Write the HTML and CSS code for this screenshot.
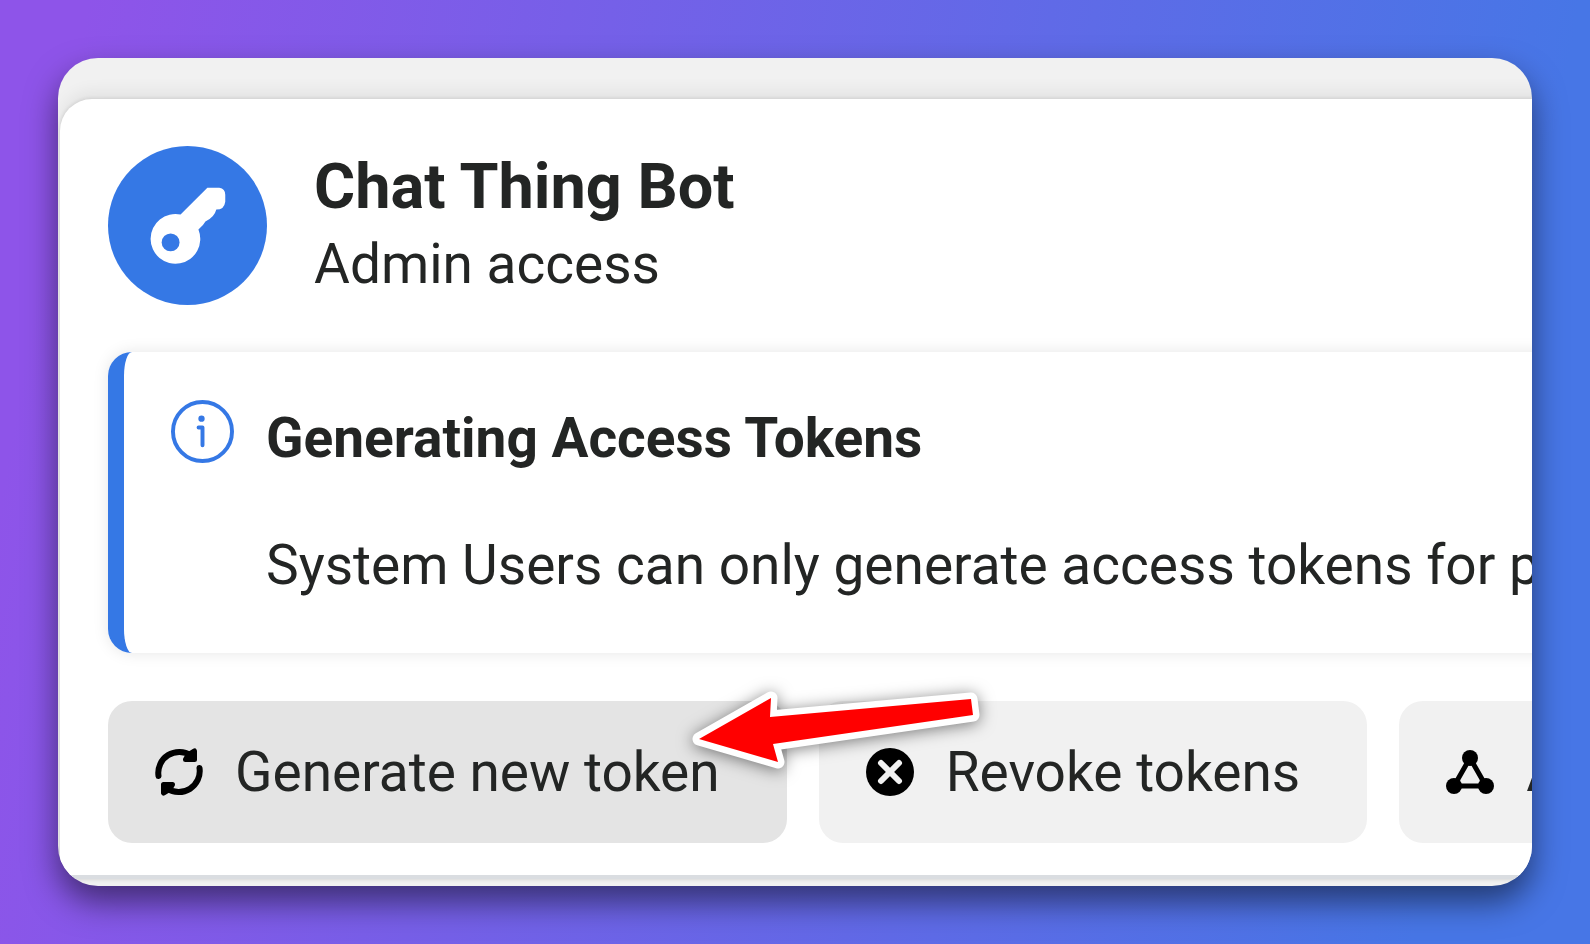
FILE: index.html
```html
<!DOCTYPE html>
<html lang="en">
<head>
    <meta charset="UTF-8">
    <meta name="viewport" content="width=device-width, initial-scale=1.0">
    <title>Chat Thing Bot</title>
    <link rel="stylesheet" href="styles.css">
</head>
<body>

<main class="window">
    <section class="panel">
        <header class="user">
            <svg class="avatar" viewBox="0 0 160 160" aria-hidden="true">
                <circle cx="80" cy="80" r="80" fill="#3578e5"/>
                <path d="M73 69 L100 42 H112 Q118 43 118 49 V56 Q117 64 109 64 Q107 72 98 76 Q96 80 91 84 A25 25 0 1 1 73 69 Z" fill="#fff"/>
                <circle cx="63" cy="97" r="9" fill="#3578e5"/>
            </svg>
            <div>
                <h1>Chat Thing Bot</h1>
                <p>Admin access</p>
            </div>
        </header>

        <div class="notice">
            <svg class="info-icon" viewBox="0 0 64 64" aria-hidden="true">
                <circle cx="32" cy="32" r="30" fill="none" stroke="#3578e5" stroke-width="4"/>
                <circle cx="31" cy="19" r="3.2" fill="#3578e5"/>
                <path d="M28 28 H32 V46" fill="none" stroke="#3578e5" stroke-width="4" stroke-linecap="round" stroke-linejoin="round"/>
            </svg>
            <div>
                <h2>Generating Access Tokens</h2>
                <p>System Users can only generate access tokens for p</p>
            </div>
        </div>

        <div class="actions">
            <button type="button" class="active">
                <svg class="icon" viewBox="0 0 48 48" aria-hidden="true">
                    <path d="M3.500 28 A21 21 0 0 1 36 7.500 M44.500 20 A21 21 0 0 1 12 40.500" fill="none" stroke="#000" stroke-width="6" stroke-linecap="round"/>
                    <path d="M39.500 3 V11.500 H30.500 L33 7 Z M8.500 45 V36.500 H17.500 L15 41 Z" stroke="#000" stroke-width="5" stroke-linejoin="round"/>
                </svg>
                Generate new token
            </button>
            <button type="button">
                <svg class="icon" viewBox="0 0 48 48" aria-hidden="true">
                    <circle cx="24" cy="24" r="24"/>
                    <path d="M15 15 L33 33 M33 15 L15 33" stroke="#f1f1f1" stroke-width="6" stroke-linecap="round"/>
                </svg>
                Revoke tokens
            </button>
            <button type="button">
                <svg class="icon" viewBox="0 0 48 48" aria-hidden="true">
                    <path d="M24 10 L8 38 H40 Z" fill="none" stroke="#000" stroke-width="5"/>
                    <circle cx="24" cy="10" r="8"/>
                    <circle cx="8" cy="38" r="8"/>
                    <circle cx="40" cy="38" r="8"/>
                </svg>
                A
            </button>

            <!-- pointer over the first button -->
            <svg class="arrow" viewBox="0 0 300 100" aria-hidden="true">
                <path d="M19 50 L91 9 L90 28 L291 10 L293 26 L93 55 L98 73 Z" fill="#f00" stroke="#fff" stroke-width="13" stroke-linejoin="round" paint-order="stroke"/>
            </svg>
        </div>
    </section>
</main>

</body>
</html>
```

FILE: styles.css
```css
* {
    box-sizing: border-box;
}

body {
    font-family: Roboto, Arial, sans-serif;
    margin: 0;
    padding: 58px;
    min-height: 100vh;
    color: #232524;
    background: linear-gradient(100deg, #8e54e9 5%, #4776e6 90%);
}

h1, h2, p {
    margin: 0;
    white-space: nowrap;
}

.window {
    padding: 41px 0 7px 2px;
    background-color: #f1f1f1;
    border-radius: 40px;
    box-shadow: 0 16px 32px rgba(0, 0, 0, 0.5);
    overflow: hidden;
}

/* the panel and the notice run past the right edge of the window */
.panel {
    margin-right: -24px;
    padding: 47px 0 32px 48px;
    background-color: #fff;
    border-bottom: 4px solid #dadde1;
    border-radius: 32px 0 0 0;
    box-shadow: 0 -8px 16px rgba(0, 0, 0, 0.06), 0 0 4px rgba(0, 0, 0, 0.14);
}

.user {
    display: flex;
    align-items: center;
    gap: 47px;
}

.avatar {
    width: 159px;
    height: 159px;
}

.user h1 {
    font-size: 63px;
    line-height: 76px;
}

.user p {
    font-size: 55px;
    line-height: 78px;
}

.notice {
    display: flex;
    gap: 32px;
    margin-top: 47px;
    padding: 48px 0 50px 47px;
    border-left: 16px solid #3578e5;
    border-radius: 24px 0 0 24px;
    box-shadow: 0 0 16px rgba(0, 0, 0, 0.1);
}

.info-icon {
    flex: none;
    width: 63px;
    height: 63px;
}

.notice h2 {
    font-size: 55px;
    line-height: 76px;
}

.notice p {
    margin-top: 51px;
    font-size: 55px;
    line-height: 76px;
}

.actions {
    position: relative;
    display: flex;
    gap: 32px;
    margin-top: 48px;
}

.actions button {
    display: flex;
    flex: none;
    align-items: center;
    gap: 32px;
    padding: 32px 67px 32px 47px;
    border: none;
    border-radius: 24px;
    background-color: #f1f1f1;
    color: #232524;
    font-family: inherit;
    font-size: 55px;
    line-height: 78px;
    white-space: nowrap;
    cursor: pointer;
}

.actions button.active {
    background-color: #e4e4e4;
}

.icon {
    flex: none;
    width: 48px;
    height: 48px;
}

.arrow {
    position: absolute;
    top: -12px;
    left: 572px;
    width: 300px;
    height: 100px;
    overflow: visible;
    filter: drop-shadow(0 2px 8px rgba(0, 0, 0, 0.5));
}
```
